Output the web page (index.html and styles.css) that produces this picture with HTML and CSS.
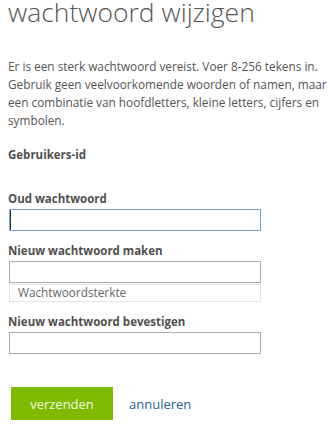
FILE: index.html
```html
<!DOCTYPE html>
<html lang="nl">
<head>
    <meta charset="UTF-8">
    <meta name="viewport" content="width=device-width, initial-scale=1.0">
    <title>wachtwoord wijzigen</title>
    <link rel="stylesheet" href="styles.css">
</head>
<body>
    <div class="page">
        <h1 class="title">wachtwoord wijzigen</h1>
        <p class="intro">Er is een sterk wachtwoord vereist. Voer 8-256 tekens in. Gebruik geen veelvoorkomende woorden of namen, maar een combinatie van hoofdletters, kleine letters, cijfers en symbolen.</p>

        <form class="pw-form">
            <div class="user-id">Gebruikers-id</div>

            <div class="field field-first">
                <label for="old">Oud wachtwoord</label>
                <input type="password" id="old" class="focused">
            </div>

            <div class="field">
                <label for="new">Nieuw wachtwoord maken</label>
                <input type="password" id="new">
                <div class="strength">Wachtwoordsterkte</div>
            </div>

            <div class="field">
                <label for="confirm">Nieuw wachtwoord bevestigen</label>
                <input type="password" id="confirm">
            </div>

            <div class="actions">
                <button type="submit" class="btn-send">verzenden</button>
                <a href="#" class="cancel">annuleren</a>
            </div>
        </form>
    </div>
</body>
</html>
```

FILE: styles.css
```css
body {
    margin: 0;
    padding: 0;
    background-color: #fff;
    font-family: "Open Sans", "Noto Sans", sans-serif;
    color: #505050;
}

.page {
    padding-left: 8px;
    width: 320px;
}

.title {
    margin: -3px 0 0 0;
    font-size: 26.5px;
    line-height: 30px;
    font-weight: 300;
    color: #555;
}

.intro {
    margin: 30px 0 0 0;
    font-size: 11.8px;
    line-height: 18px;
    color: #555;
}

.pw-form {
    margin: 0;
}

.user-id {
    margin-top: 17px;
    font-size: 11.5px;
    line-height: 18px;
    font-weight: bold;
    color: #505050;
}

.field {
    margin-top: 11px;
}

.field-first {
    margin-top: 26px;
}

.field label {
    display: block;
    font-size: 11.5px;
    line-height: 18px;
    font-weight: bold;
    color: #505050;
    margin-bottom: 1px;
}

.field input {
    display: block;
    box-sizing: border-box;
    width: 252px;
    height: 22px;
    margin: 0 0 0 1px;
    padding: 2px 4px;
    border: 1px solid #abadb3;
    outline: none;
    font-family: inherit;
}

.field input.focused {
    border-color: #7ca3d1;
    box-shadow: inset 1px 0 0 #333;
}

.strength {
    box-sizing: border-box;
    width: 252px;
    height: 18px;
    margin: 1px 0 0 1px;
    padding-left: 8px;
    border: 1px solid #dde5ed;
    font-size: 11.8px;
    line-height: 15px;
    color: #666;
}

.actions {
    display: flex;
    align-items: center;
    margin-top: 33px;
    padding-left: 3px;
}

.btn-send {
    width: 102px;
    height: 33px;
    border: none;
    background-color: #7fba00;
    color: #f2f7e6;
    font-family: inherit;
    font-size: 13px;
    cursor: pointer;
}

.cancel {
    margin-left: 16px;
    font-size: 13px;
    color: #2e5f8f;
    text-decoration: none;
}
```
